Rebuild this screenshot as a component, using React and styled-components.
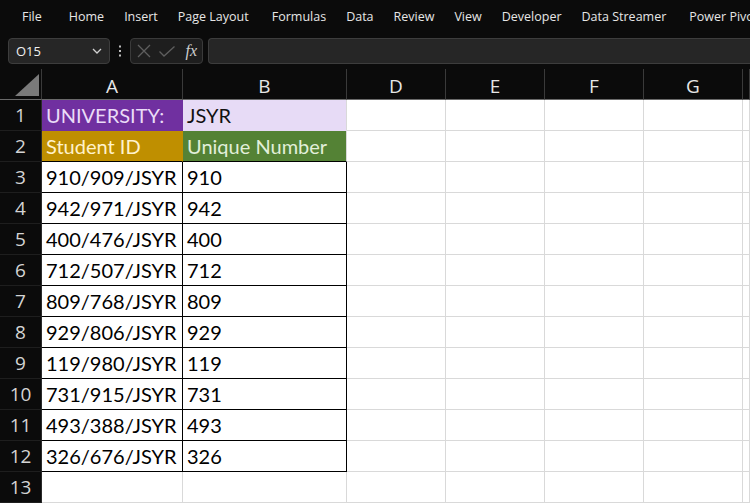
import React from 'react';
import styled, { createGlobalStyle } from 'styled-components';

const GlobalStyle = createGlobalStyle`
  html, body {
    margin: 0;
    padding: 0;
    background: #0b0b0b;
    overflow: hidden;
  }
  #root {
    width: 750px;
    height: 503px;
    overflow: hidden;
  }
`;

const Page = styled.div`
  width: 750px;
  height: 503px;
  background: #0b0b0b;
  display: flex;
  flex-direction: column;
  font-family: "Open Sans", "Noto Sans", sans-serif;
`;

const MenuBar = styled.div`
  height: 32px;
  display: flex;
  align-items: center;
  padding-left: 22px;
  gap: 20px;
  white-space: nowrap;
  overflow: hidden;
`;

const MenuItem = styled.span`
  color: #e6e6e6;
  font-size: 12.5px;
  font-family: "Open Sans", sans-serif;
  margin-right: ${p => p.$extra || 0}px;
`;

const FormulaBar = styled.div`
  height: 37px;
  display: flex;
  align-items: center;
  padding: 1px 0 0 8px;
  box-sizing: border-box;
`;

const NameBox = styled.div`
  width: 102px;
  height: 26px;
  box-sizing: border-box;
  background: #262626;
  border: 1px solid #3d3d3d;
  border-radius: 4px;
  display: flex;
  align-items: center;
  justify-content: space-between;
  padding: 0 6px 0 7px;
  color: #f0f0f0;
  font-size: 13px;
`;

const Dots = styled.div`
  width: 20px;
  display: flex;
  justify-content: center;
`;

const FxBox = styled.div`
  width: 73px;
  height: 26px;
  box-sizing: border-box;
  background: #1e1e1e;
  border: 1px solid #3a3a3a;
  border-radius: 4px;
  display: flex;
  align-items: center;
  padding: 0 5px 0 6px;
  gap: 7px;
`;

const Fx = styled.span`
  font-family: "Liberation Serif", serif;
  font-style: italic;
  color: #cfcfcf;
  font-size: 16px;
  margin-left: auto;
`;

const FormulaInput = styled.div`
  flex: 1;
  height: 26px;
  margin-left: 5px;
  box-sizing: border-box;
  background: #262626;
  border: 1px solid #3d3d3d;
  border-right: none;
  border-radius: 4px 0 0 4px;
`;

const Sheet = styled.div`
  display: grid;
  grid-template-columns: 42px 141px 164px 99px 99px 99px 99px 1fr;
  grid-template-rows: 31px repeat(13, 31px);
`;

const Corner = styled.div`
  background: #0b0b0b;
  border-right: 1px solid #3a3a3a;
  border-bottom: 1px solid #6a6a6a;
  display: flex;
  align-items: flex-end;
  justify-content: flex-end;
  padding: 0 2px 3px 0;
`;

const ColHead = styled.div`
  background: #0b0b0b;
  color: #e6e6e6;
  font-family: "Open Sans", sans-serif;
  font-size: 19px;
  display: flex;
  align-items: center;
  justify-content: center;
  border-right: 1px solid #3a3a3a;
  border-bottom: 1px solid #6a6a6a;
  box-sizing: border-box;
  padding-top: 3px;
`;

const RowHead = styled.div`
  background: #0b0b0b;
  color: #d4d4d4;
  font-family: "Open Sans", sans-serif;
  font-size: 19px;
  display: flex;
  align-items: center;
  justify-content: center;
  border-right: 1px solid #2a2a2a;
  border-bottom: 1px solid #1e1e1e;
  box-sizing: border-box;
`;

const Cell = styled.div`
  background: ${p => p.$bg || '#ffffff'};
  color: ${p => p.$fg || '#000000'};
  font-family: "Lato", "Open Sans", sans-serif;
  font-size: 20px;
  display: flex;
  align-items: center;
  padding-left: 4px;
  white-space: nowrap;
  box-sizing: border-box;
  border-right: 1px solid ${p => p.$br || '#d9d9d9'};
  border-bottom: 1px solid ${p => p.$bb || '#d9d9d9'};
`;

const menu = [
  ['File', 7], ['Home'], ['Insert'], ['Page Layout', 3], ['Formulas'], ['Data'],
  ['Review'], ['View'], ['Developer'], ['Data Streamer', 3], ['Power Pivot'],
];
const cols = ['A', 'B', 'D', 'E', 'F', 'G', ''];

const data = [
  ['910/909/JSYR', '910'],
  ['942/971/JSYR', '942'],
  ['400/476/JSYR', '400'],
  ['712/507/JSYR', '712'],
  ['809/768/JSYR', '809'],
  ['929/806/JSYR', '929'],
  ['119/980/JSYR', '119'],
  ['731/915/JSYR', '731'],
  ['493/388/JSYR', '493'],
  ['326/676/JSYR', '326'],
];

const PURPLE = '#7030a0';
const LAVENDER = '#e7dbf6';
const GOLD = '#bf8f00';
const GREEN = '#548235';

function cellProps(row, col) {
  // row is the sheet row (1-based), col indexes cols
  if (row === 1 && col === 0) return { $bg: PURPLE, $fg: '#eadcf7', $br: PURPLE, $bb: PURPLE };
  if (row === 1 && col === 1) return { $bg: LAVENDER, $fg: '#111', $bb: LAVENDER };
  if (row === 2 && col === 0) return { $bg: GOLD, $fg: '#fff2cc', $br: GOLD, $bb: '#000' };
  if (row === 2 && col === 1) return { $bg: GREEN, $fg: '#e2efda', $bb: '#000' };
  if (row >= 3 && row <= 12 && col <= 1) return { $br: '#000', $bb: '#000' };
  return {};
}

function cellText(row, col) {
  if (row === 1) return col === 0 ? 'UNIVERSITY:' : col === 1 ? 'JSYR' : '';
  if (row === 2) return col === 0 ? 'Student ID' : col === 1 ? 'Unique Number' : '';
  if (row >= 3 && row <= 12 && col <= 1) return data[row - 3][col];
  return '';
}

const App = () => {
  const rows = Array.from({ length: 13 }, (_, i) => i + 1);
  return (
    <Page>
      <GlobalStyle />
      <MenuBar>
        {menu.map(([label, extra]) => <MenuItem key={label} $extra={extra}>{label}</MenuItem>)}
      </MenuBar>
      <FormulaBar>
        <NameBox>
          <span>O15</span>
          <svg width="12" height="12" viewBox="0 0 12 12">
            <path d="M2 4 L6 8 L10 4" fill="none" stroke="#d0d0d0" strokeWidth="1.3" />
          </svg>
        </NameBox>
        <Dots>
          <svg width="4" height="14" viewBox="0 0 4 14">
            <rect x="1" y="1.5" width="2" height="2" fill="#bdbdbd" />
            <rect x="1" y="6" width="2" height="2" fill="#bdbdbd" />
            <rect x="1" y="10.5" width="2" height="2" fill="#bdbdbd" />
          </svg>
        </Dots>
        <FxBox>
          <svg width="14" height="14" viewBox="0 0 14 14">
            <path d="M1 1 L13 13 M13 1 L1 13" stroke="#5e5e5e" strokeWidth="1.3" />
          </svg>
          <svg width="18" height="14" viewBox="0 0 18 14">
            <path d="M1.5 7.5 L6 12 L16.5 2.5" fill="none" stroke="#5e5e5e" strokeWidth="1.3" />
          </svg>
          <Fx>fx</Fx>
        </FxBox>
        <FormulaInput />
      </FormulaBar>
      <Sheet>
        <Corner>
          <svg width="24" height="22" viewBox="0 0 24 22">
            <polygon points="24,0 24,22 0,22" fill="#7a7a7a" />
          </svg>
        </Corner>
        {cols.map((c, i) => <ColHead key={'h' + i}>{c}</ColHead>)}
        {rows.map(r => (
          <React.Fragment key={r}>
            <RowHead>{r}</RowHead>
            {cols.map((c, i) => (
              <Cell key={r + '-' + i} {...cellProps(r, i)}>{cellText(r, i)}</Cell>
            ))}
          </React.Fragment>
        ))}
      </Sheet>
    </Page>
  );
};

export default App;
